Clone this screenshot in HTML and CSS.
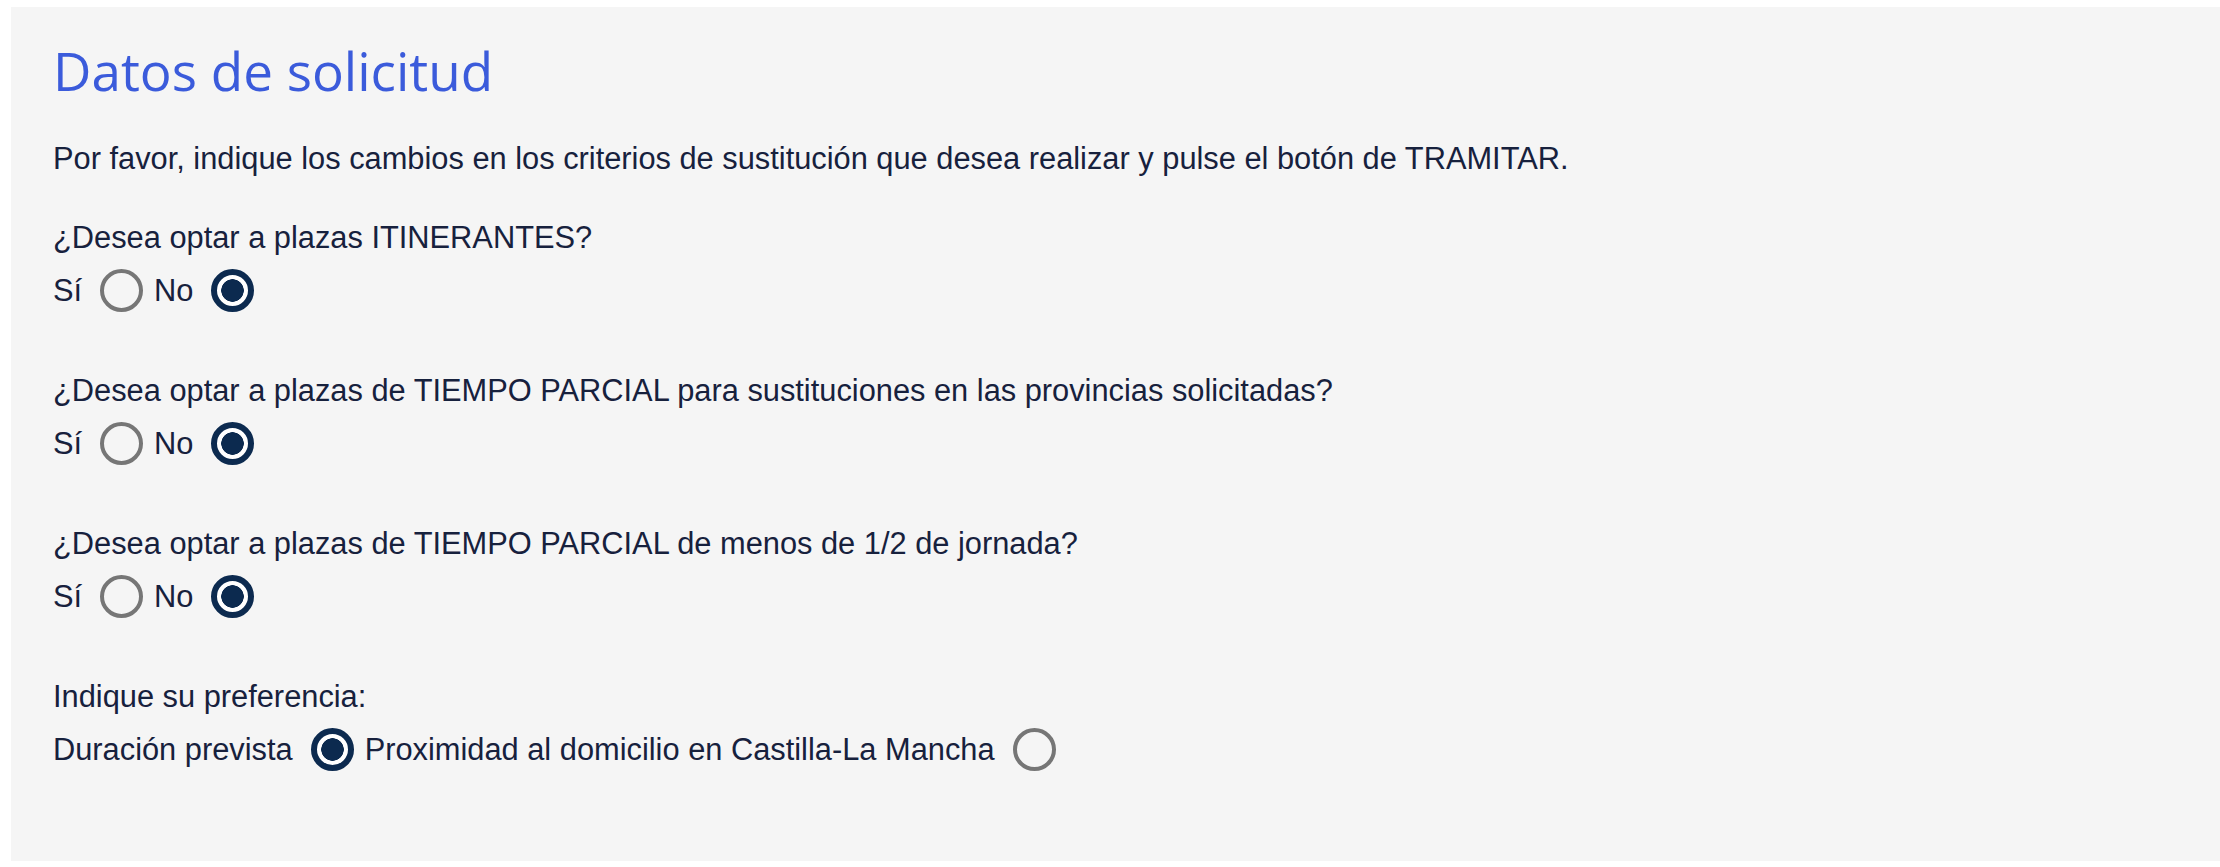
FILE: index.html
```html
<!DOCTYPE html>
<html lang="es">
<head>
<meta charset="utf-8">
<title>Datos de solicitud</title>
<link rel="stylesheet" href="styles.css">
</head>
<body>
<main class="panel">
  <h1 class="title">Datos de solicitud</h1>
  <p class="intro">Por favor, indique los cambios en los criterios de sustitución que desea realizar y pulse el botón de TRAMITAR.</p>

  <section class="group">
    <p class="question">¿Desea optar a plazas ITINERANTES?</p>
    <div class="options">
      <label class="opt">Sí</label><input type="radio" class="radio" name="q1">
      <label class="opt">No</label><input type="radio" class="radio" name="q1" checked>
    </div>
  </section>

  <section class="group">
    <p class="question">¿Desea optar a plazas de TIEMPO PARCIAL para sustituciones en las provincias solicitadas?</p>
    <div class="options">
      <label class="opt">Sí</label><input type="radio" class="radio" name="q2">
      <label class="opt">No</label><input type="radio" class="radio" name="q2" checked>
    </div>
  </section>

  <section class="group">
    <p class="question">¿Desea optar a plazas de TIEMPO PARCIAL de menos de 1/2 de jornada?</p>
    <div class="options">
      <label class="opt">Sí</label><input type="radio" class="radio" name="q3">
      <label class="opt">No</label><input type="radio" class="radio" name="q3" checked>
    </div>
  </section>

  <section class="group">
    <p class="question">Indique su preferencia:</p>
    <div class="options">
      <label class="opt">Duración prevista</label><input type="radio" class="radio" name="q4" checked>
      <label class="opt">Proximidad al domicilio en Castilla-La Mancha</label><input type="radio" class="radio" name="q4">
    </div>
  </section>
</main>
</body>
</html>
```

FILE: styles.css
```css
html, body {
  margin: 0;
  padding: 0;
  background: #ffffff;
}

body {
  padding: 7px 0 6px 11px;
}

.panel {
  box-sizing: border-box;
  height: 854px;
  background: #f5f5f5;
  padding: 34px 0 0 42px;
  font-family: "Liberation Sans", Arial, sans-serif;
  font-size: 30.8px;
  line-height: 42px;
  color: #17213d;
}

.title {
  margin: 0;
  font-family: "Open Sans", "Noto Sans", sans-serif;
  font-weight: 500;
  font-size: 53px;
  line-height: 60px;
  color: #3b5bdb;
}

.intro {
  margin: 37px 0 0 0;
}

.group {
  margin-top: 37px;
}

.group + .group {
  margin-top: 58px;
}

.question {
  margin: 0;
}

.options {
  display: flex;
  align-items: center;
  margin-top: 10px;
  height: 43px;
}

.opt {
  white-space: nowrap;
}

.radio {
  appearance: none;
  -webkit-appearance: none;
  box-sizing: border-box;
  width: 43px;
  height: 43px;
  margin: 0 11px 0 18px;
  border-radius: 50%;
  border: 4px solid #767676;
  background: transparent;
  flex: none;
}

.radio:checked {
  border: 6px solid #0c2a4f;
  background: radial-gradient(circle, #0c2a4f 0 11px, #ffffff 11.5px);
}
```
